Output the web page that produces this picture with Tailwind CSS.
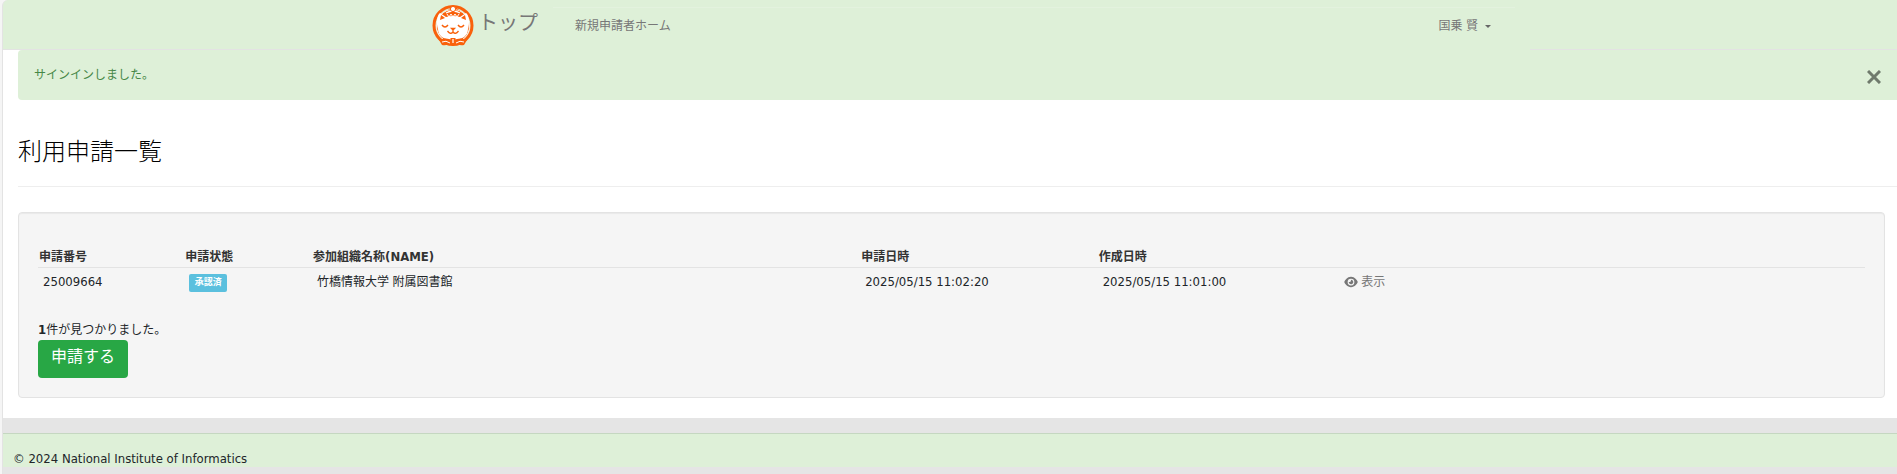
<!DOCTYPE html>
<html lang="ja">

<head>
  <meta charset="UTF-8" />
  <title>利用申請一覧</title>
  <meta name="viewport" content="width=device-width, initial-scale=1" />
  <script src="https://cdn.jsdelivr.net/npm/@tailwindcss/browser@4"></script>
</head>

<body class="bg-[#f5f5f5] pl-[2px] min-h-screen flex flex-col overflow-x-hidden font-['DejaVu_Sans_Condensed','Noto_Sans_CJK_JP',sans-serif] text-xs text-[#212529]">
  <div class="grow border-l border-[#e3e3e3] rounded-tl-md bg-[#e5e5e5] overflow-hidden">
    <nav class="bg-[#def0d8] border-b border-[#e3e3e3] pl-5">
      <!-- the container covers the border below the bar -->
      <div class="relative -mb-px bg-[#def0d8] max-w-[1140px] h-[50px] mx-auto pl-[42px] pr-[15px] flex">
        <a href="#" class="flex items-center gap-1 w-[121px] pb-2 pt-1 text-xl leading-7 text-[#777] whitespace-nowrap">
          <svg class="w-[42px] h-[42px] mt-[5px] shrink-0" viewBox="0 0 42 42" fill="none">
            <circle cx="21" cy="20.500" r="19" stroke="#f9610b" stroke-width="3" />
            <path d="M14 8c0-3 3-3 4-5 1-3 6-3 7 0 1 2 4 2 4 5l-2 3H16z" fill="#f9610b" />
            <circle cx="21" cy="21" r="16.500" fill="#f9610b" stroke="#fff" stroke-width=".8" />
            <path d="M6 24C4 18 5 10 8 8l6 4q7-2 14 0l6-4c3 2 4 10 2 16 0 7-6 11-15 11S6 31 6 24z" fill="#fff" />
            <path d="M8 15l1-5 4 3zM34 15l-1-5-4 3z" fill="#f9610b" />
            <path d="M14 8q7-4 14 0" stroke="#fff" stroke-width="1.400" />
            <path d="M15 9l2 3 2-3 2 3 2-3 2 3 2-3" stroke="#fff" stroke-width="1" />
            <circle cx="21" cy="4" r="2.600" fill="#fff" stroke="#f9610b" stroke-width="1" />
            <path d="M10 20q3 4 6 0M26 20q3 4 6 0" stroke="#f9610b" stroke-width="1.400" />
            <path d="M19.500 23.500h3L21 25zM21 25v2M15.500 26q3 4 5.500 1 2.500 3 5.500-1" stroke="#f9610b" stroke-width="1.300" />
            <path d="M20 35q-6-3-13 0l3 5q6 1 10-3zM22 35q6-3 13 0l-3 5q-6 1-10-3z" fill="#f9610b" />
            <path d="M10 37q4-2 8 1M32 37q-4-2-8 1" stroke="#fff" stroke-width="1" />
            <path d="M18.500 33h5v6L21 41l-2.500-2z" fill="#f9610b" />
            <path d="M21 34v4" stroke="#fff" stroke-width="1.200" />
          </svg>
          <span>トップ</span>
        </a>
        <div class="grow mt-[7px] border-t border-[#e3f2de] flex items-start justify-between pl-[22px] pr-6 pt-[9px] leading-[18px]">
          <a href="#" class="text-[#777]">新規申請者ホーム</a>
          <button type="button" class="flex items-center gap-[7px] text-[#777]">
            国乗 賢
            <svg class="w-[6px] h-[3px]" viewBox="0 0 6 3" fill="#666"><path d="M0 0h6L3 3z" /></svg>
          </button>
        </div>
      </div>
    </nav>

    <main class="bg-white pl-[15px] pb-5">
      <div role="alert" class="flex items-center justify-between bg-[#def0d8] rounded-l-sm h-[50px] px-4 text-[#468847]">
        <span class="leading-4">サインインしました。</span>
        <button type="button" aria-label="閉じる" class="mt-1">
          <svg class="w-[14px] h-[14px]" viewBox="0 0 14 14" stroke="#6f7a6c" stroke-width="3"><path d="M1 1l12 12M13 1L1 13" /></svg>
        </button>
      </div>

      <h1 class="mt-8 text-2xl leading-10 font-light text-black">利用申請一覧</h1>
      <hr class="mt-[14px] border-[#eee]" />

      <section class="mt-[25px] mr-3 px-[19px] pt-[34px] pb-[19px] bg-[#f5f5f5] border border-[#e3e3e3] rounded-sm shadow-[inset_0_1px_1px_rgba(0,0,0,0.05)]">
        <table class="w-full table-fixed text-left">
          <thead>
            <tr class="border-b border-[#e3e3e3] leading-5 text-[#333]">
              <th class="w-[8%] pl-px font-bold">申請番号</th>
              <th class="w-[7%] pl-px font-bold">申請状態</th>
              <th class="w-[30%] pl-px font-bold">参加組織名称<span class="text-[13px]">(NAME)</span></th>
              <th class="w-[13%] pl-px font-bold">申請日時</th>
              <th class="w-[13%] pl-px font-bold">作成日時</th>
              <th></th>
            </tr>
          </thead>
          <tbody>
            <tr class="leading-5">
              <td class="pl-[5px] pt-1 text-[13px]">25009664</td>
              <td class="pl-[5px] pt-[6px] align-top"><span class="block w-[38px] h-[18px] rounded-xs bg-[#5bc0de] text-center text-[9px] leading-[17px] font-bold text-white">承認済</span></td>
              <td class="pl-[5px] pt-1">竹橋情報大学 附属図書館</td>
              <td class="pl-[5px] pt-1 text-[13px]">2025/05/15 11:02:20</td>
              <td class="pl-[5px] pt-1 text-[13px]">2025/05/15 11:01:00</td>
              <td class="pl-[9px] pt-1">
                <a href="#" class="flex items-center gap-[3px] text-[#777]">
                  <svg class="w-[14px] h-3" viewBox="0 0 576 512" fill="#777"><path d="M288 32c-81 0-146 37-193 81C48 156 17 208 3 244c-3 8-3 16 0 24 14 36 45 88 92 131 47 44 112 81 193 81s146-37 193-81c47-43 78-95 93-131 3-8 3-16 0-24-15-36-46-88-93-131C434 69 369 32 288 32zM144 256a144 144 0 11288 0 144 144 0 11-288 0zm144-64c0 35-29 64-64 64-7 0-14-1-20-3-6-2-13 2-12 8 0 7 1 14 3 21 14 51 66 82 118 68s82-66 68-118c-11-41-48-70-89-71-6 0-10 6-8 12 3 6 4 13 4 19z" /></svg>
                  表示
                </a>
              </td>
            </tr>
          </tbody>
        </table>
        <p class="mt-7 leading-5"><b class="text-[13px]">1</b>件が見つかりました。</p>
        <button type="button" class="block w-[90px] h-[38px] pb-1 rounded-sm bg-[#28a745] text-base text-white">申請する</button>
      </section>
    </main>

    <footer class="mt-[15px] h-[34px] bg-[#def0d8] border-t border-[#c5d7c1] pl-[10px] pt-[15px] text-[13px] leading-5">
      © 2024 National Institute of Informatics
    </footer>
  </div>
</body>

</html>
